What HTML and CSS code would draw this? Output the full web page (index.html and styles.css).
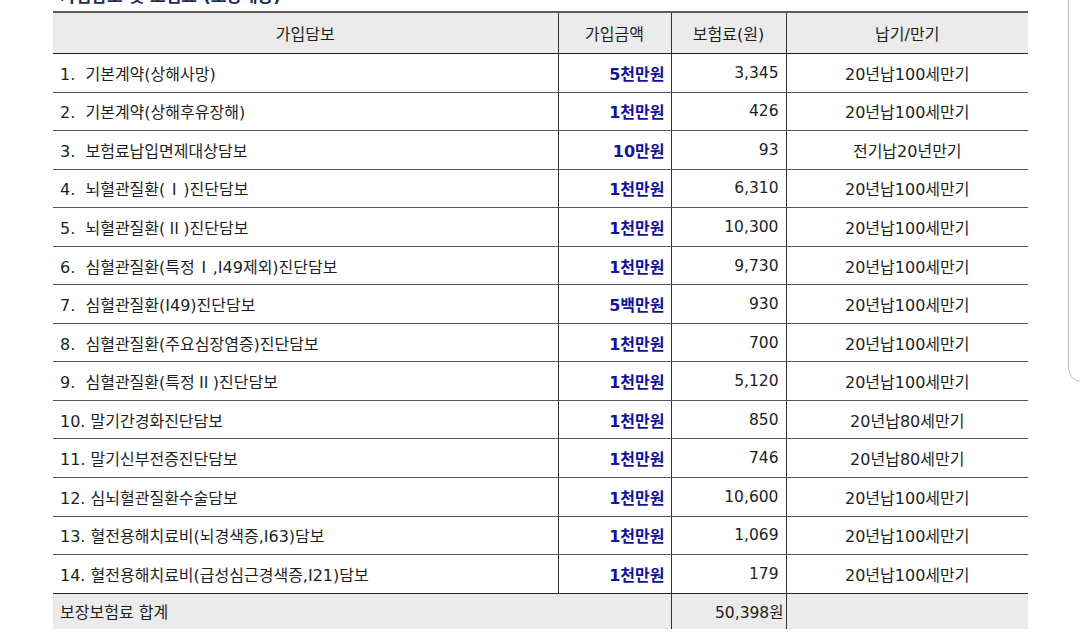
FILE: index.html
```html
<!DOCTYPE html>
<html lang="ko">
<head>
<meta charset="utf-8">
<title>가입담보</title>
<link rel="stylesheet" href="styles.css">
</head>
<body>
<div class="page">
  <main class="content">
    <h2 class="title">가입담보 및 보험료 (보장내용)</h2>
    <table class="cov">
      <colgroup>
        <col class="c-name"><col class="c-amt"><col class="c-prem"><col class="c-term">
      </colgroup>
      <thead>
        <tr><th>가입담보</th><th>가입금액</th><th>보험료(원)</th><th>납기/만기</th></tr>
      </thead>
      <tbody>
        <tr><td class="name">1.&nbsp; 기본계약(상해사망)</td><td class="amt">5천만원</td><td class="prem">3,345</td><td class="term">20년납100세만기</td></tr>
        <tr><td class="name">2.&nbsp; 기본계약(상해후유장해)</td><td class="amt">1천만원</td><td class="prem">426</td><td class="term">20년납100세만기</td></tr>
        <tr><td class="name">3.&nbsp; 보험료납입면제대상담보</td><td class="amt">10만원</td><td class="prem">93</td><td class="term">전기납20년만기</td></tr>
        <tr><td class="name">4.&nbsp; 뇌혈관질환(<span class="rn">Ⅰ</span>)진단담보</td><td class="amt">1천만원</td><td class="prem">6,310</td><td class="term">20년납100세만기</td></tr>
        <tr><td class="name">5.&nbsp; 뇌혈관질환(<span class="rn">Ⅱ</span>)진단담보</td><td class="amt">1천만원</td><td class="prem">10,300</td><td class="term">20년납100세만기</td></tr>
        <tr><td class="name">6.&nbsp; 심혈관질환(특정<span class="rn">Ⅰ</span>,I49제외)진단담보</td><td class="amt">1천만원</td><td class="prem">9,730</td><td class="term">20년납100세만기</td></tr>
        <tr><td class="name">7.&nbsp; 심혈관질환(I49)진단담보</td><td class="amt">5백만원</td><td class="prem">930</td><td class="term">20년납100세만기</td></tr>
        <tr><td class="name">8.&nbsp; 심혈관질환(주요심장염증)진단담보</td><td class="amt">1천만원</td><td class="prem">700</td><td class="term">20년납100세만기</td></tr>
        <tr><td class="name">9.&nbsp; 심혈관질환(특정<span class="rn">Ⅱ</span>)진단담보</td><td class="amt">1천만원</td><td class="prem">5,120</td><td class="term">20년납100세만기</td></tr>
        <tr><td class="name">10. 말기간경화진단담보</td><td class="amt">1천만원</td><td class="prem">850</td><td class="term">20년납80세만기</td></tr>
        <tr><td class="name">11. 말기신부전증진단담보</td><td class="amt">1천만원</td><td class="prem">746</td><td class="term">20년납80세만기</td></tr>
        <tr><td class="name">12. 심뇌혈관질환수술담보</td><td class="amt">1천만원</td><td class="prem">10,600</td><td class="term">20년납100세만기</td></tr>
        <tr><td class="name">13. 혈전용해치료비(뇌경색증,I63)담보</td><td class="amt">1천만원</td><td class="prem">1,069</td><td class="term">20년납100세만기</td></tr>
        <tr class="last"><td class="name">14. 혈전용해치료비(급성심근경색증,I21)담보</td><td class="amt">1천만원</td><td class="prem">179</td><td class="term">20년납100세만기</td></tr>
      </tbody>
      <tfoot>
        <tr><td class="name" colspan="2">보장보험료 합계</td><td class="total">50,398원</td><td class="blank"></td></tr>
      </tfoot>
    </table>
  </main>
  <aside class="side-panel"></aside>
</div>
</body>
</html>
```

FILE: styles.css
```css
html, body {
  margin: 0;
  padding: 0;
  background: #ffffff;
  overflow: hidden;
}

body {
  font-family: "DejaVu Sans", "Noto Sans CJK KR", sans-serif;
  font-size: 16px;
  color: #1e1e1e;
}

.page {
  display: flex;
  align-items: flex-start;
  margin-top: -16px;
  padding-left: 53px;
}

.content {
  flex: none;
  width: 975px;
}

.title {
  margin: 0 0 3px 7px;
  height: 24px;
  line-height: 24px;
  font-size: 17px;
  font-weight: bold;
  color: #1d2b55;
  white-space: nowrap;
}

.side-panel {
  flex: none;
  box-sizing: border-box;
  margin-left: 40px;
  width: 40px;
  height: 398px;
  border: 1.5px solid #c2c2c2;
  border-radius: 14px;
}

.cov {
  width: 975px;
  table-layout: fixed;
  border-collapse: collapse;
  border-spacing: 0;
}

.c-name { width: 505px; }
.c-amt { width: 113px; }
.c-prem { width: 115px; }
.c-term { width: 242px; }

.cov th {
  height: 40px;
  padding: 0;
  background: #ebebeb;
  border-top: 2px solid #5a5a5a;
  border-bottom: 1px solid #222222;
  font-weight: normal;
  text-align: center;
  color: #1e1e1e;
}

.cov th + th,
.cov td + td {
  border-left: 1px solid #333333;
}

.cov tbody td {
  height: 37.55px;
  padding: 0;
  border-bottom: 1px solid #555555;
  white-space: nowrap;
}

.cov tbody tr.last td {
  border-bottom: 1px solid #222222;
}

.rn {
  font-family: "Noto Sans CJK KR", sans-serif;
  padding: 0 1px;
}

.cov td.name {
  padding-left: 7px;
  text-align: left;
}

.cov td.amt {
  padding-right: 6px;
  text-align: right;
  font-weight: bold;
  color: #13139a;
}

.cov td.prem {
  padding-right: 7px;
  text-align: right;
  font-size: 15.5px;
}

.cov td.term {
  text-align: center;
}

.cov tfoot td {
  height: 35px;
  padding: 0;
  background: #ebebeb;
}

.cov tfoot td.total {
  padding-right: 2px;
  text-align: right;
  font-size: 15.5px;
  border-right: 1px solid #333333;
}

.cov tfoot td.blank {
  border-left: none;
}
```
